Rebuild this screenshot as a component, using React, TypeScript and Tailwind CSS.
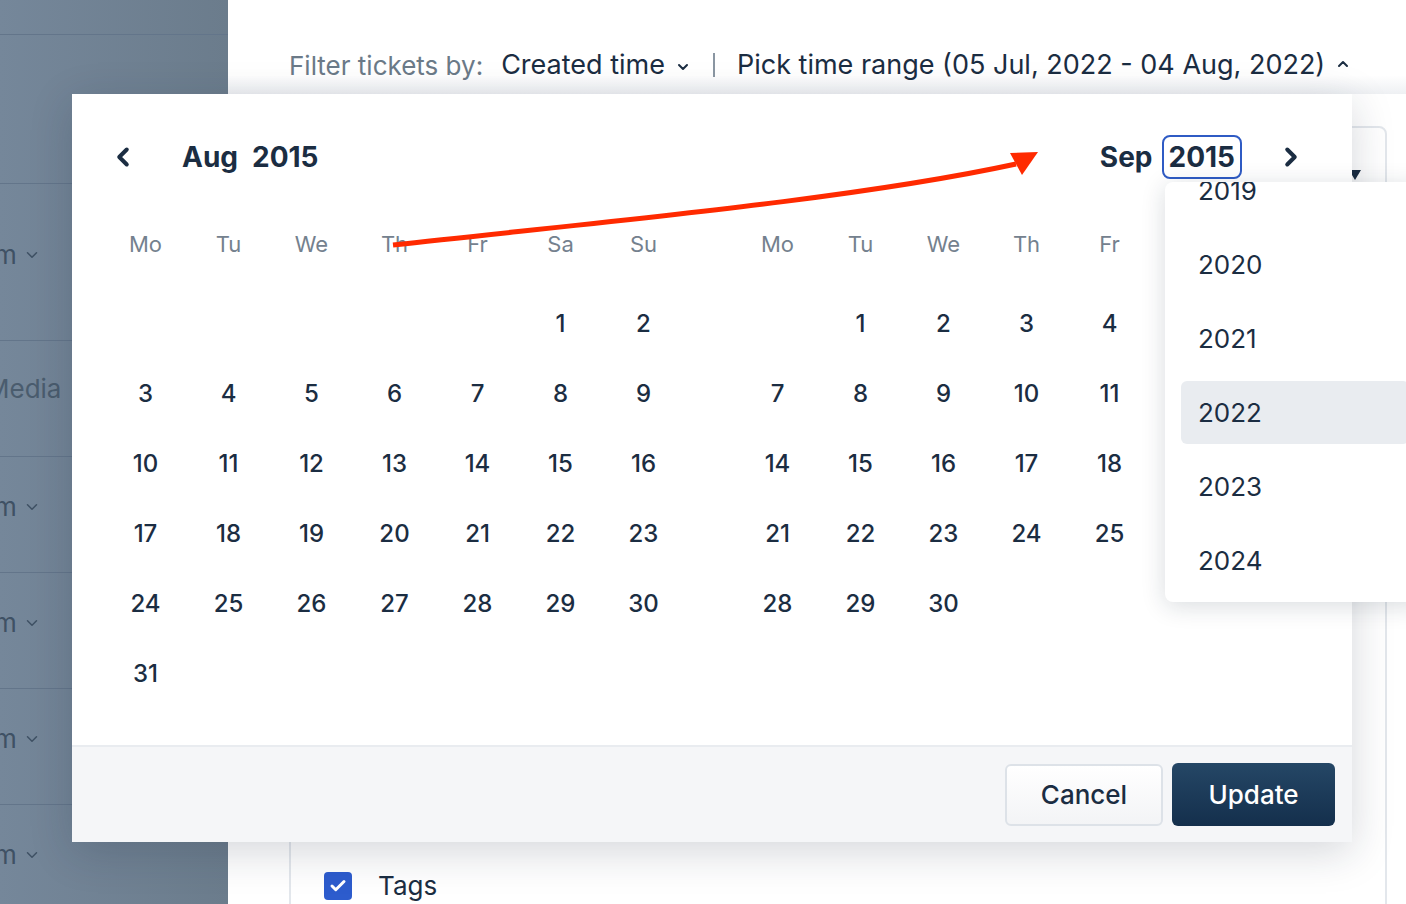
import { ChevronDown, ChevronLeft, ChevronRight, ChevronUp, Check } from 'lucide-react'

const WEEKDAYS = ['Mo', 'Tu', 'We', 'Th', 'Fr', 'Sa', 'Su']

// Build the cells for a month grid, Monday first.
function monthCells(offset: number, days: number) {
  const cells: (number | null)[] = []
  for (let i = 0; i < offset; i++) cells.push(null)
  for (let d = 1; d <= days; d++) cells.push(d)
  return cells
}

function MonthGrid({ offset, days }: { offset: number; days: number }) {
  return (
    <>
      <div className="mt-[30px] grid grid-cols-7">
        {WEEKDAYS.map((w) => (
          <div key={w} className="flex h-[70px] items-center justify-center text-[22px] text-[#74818e]">
            {w}
          </div>
        ))}
      </div>
      <div className="mt-[10px] grid grid-cols-7">
        {monthCells(offset, days).map((d, i) => (
          <div key={i} className="flex h-[70px] items-center justify-center text-[24px] font-medium text-[#1b2d42]">
            {d ?? ''}
          </div>
        ))}
      </div>
    </>
  )
}

const SIDEBAR_ROWS = [
  { h: 'h-[35px]', label: null },
  { h: 'h-[149px]', label: null },
  { h: 'h-[157px]', label: 'm', pt: 'pt-[51px]' },
  { h: 'h-[116px]', label: 'Media', pt: 'pt-[28px]' },
  { h: 'h-[116px]', label: 'm', pt: 'pt-[30px]' },
  { h: 'h-[116px]', label: 'm', pt: 'pt-[30px]' },
  { h: 'h-[116px]', label: 'm', pt: 'pt-[30px]' },
  { h: 'h-[116px]', label: 'm', pt: 'pt-[30px]' },
]

export default function App() {
  return (
    <div className="relative h-[904px] w-[1406px] overflow-hidden bg-white font-['Inter',sans-serif]">
      <div className="flex h-full">
        {/* dimmed sidebar */}
        <aside className="h-full w-[228px] shrink-0 overflow-hidden bg-gradient-to-r from-[#75879a] to-[#6b7c8c]">
          {SIDEBAR_ROWS.map((row, i) => (
            <div key={i} className={`${row.h} ${row.pt ?? ''} border-b border-[#63758a]`}>
              {row.label === 'Media' && (
                <span className="-ml-[14px] text-[26px] text-[#4a5c6e]">Media</span>
              )}
              {row.label === 'm' && (
                <span className="-ml-[6px] flex items-center gap-[6px] text-[26px] text-[#3f5164]">
                  m
                  <ChevronDown size={18} strokeWidth={2} className="text-[#3f5164]" />
                </span>
              )}
            </div>
          ))}
        </aside>

        <main className="flex-1">
          <header className="flex h-[94px] bg-gradient-to-b from-white from-80% to-[#eef0f3] pl-[61px] pt-[48px]">
            <div className="flex h-[34px] items-center">
              <span className="text-[26px] text-[#6b7a88]">Filter tickets by:</span>
              <span className="ml-[18px] flex items-center text-[27px] text-[#1b2d42]">
                Created time
                <ChevronDown size={16} strokeWidth={3} className="ml-[10px] mt-[3px]" />
              </span>
              <span className="ml-[22px] h-[24px] w-[2px] bg-[#8a96a2]" />
              <span className="ml-[22px] flex items-center text-[27px] text-[#1b2d42]">
                Pick time range (05 Jul, 2022 - 04 Aug, 2022)
                <ChevronUp size={16} strokeWidth={3} className="ml-[10px] -mt-[2px]" />
              </span>
            </div>
          </header>

          <section className="ml-[61px] mr-[19px] mt-[32px] h-[800px] rounded-[8px] border-2 border-[#e3e7ec] bg-white">
            <div className="flex justify-end pr-[24px] pt-[42px]">
              <div className="h-0 w-0 border-l-[6px] border-r-[6px] border-t-[10px] border-l-transparent border-r-transparent border-t-[#1b2d42]" />
            </div>
            <div className="ml-[33px] mt-[686px] flex items-center gap-[26px]">
              <div className="flex h-[28px] w-[28px] items-center justify-center rounded-[4px] bg-[#2d5ccd]">
                <Check size={18} strokeWidth={4} className="text-white" />
              </div>
              <span className="text-[26px] text-[#1b2d42]">Tags</span>
            </div>
          </section>
        </main>
      </div>

      {/* date range popover */}
      <div className="absolute left-[72px] top-[94px] flex h-[748px] w-[1280px] flex-col bg-white shadow-[0_10px_40px_rgba(20,35,55,0.18)]">
        <div className="flex flex-1 gap-[51px] pl-[32px] pt-[41px]">
          <div className="w-[581px]">
            <div className="flex h-[44px] items-center">
              <ChevronLeft size={30} strokeWidth={3.2} className="ml-[4px] text-[#1b2d42]" />
              <div className="ml-[44px] flex items-center gap-[6px] text-[28px] font-bold text-[#1b2d42]">
                <span>Aug</span>
                <span className="rounded-[8px] border-2 border-transparent px-[6px]">2015</span>
              </div>
            </div>
            <MonthGrid offset={5} days={31} />
          </div>

          <div className="w-[581px]">
            <div className="flex h-[44px] items-center justify-end">
              <div className="flex items-center gap-[9px] text-[28px] font-bold text-[#1b2d42]">
                <span>Sep</span>
                <span className="rounded-[8px] border-2 border-[#2f5bc4] px-[5px] leading-[40px]">2015</span>
              </div>
              <ChevronRight size={30} strokeWidth={3.2} className="ml-[34px] mr-[11px] text-[#1b2d42]" />
            </div>
            <MonthGrid offset={1} days={30} />
          </div>
        </div>

        <footer className="flex h-[97px] items-center justify-end gap-[9px] border-t-2 border-[#e9ecf0] bg-[#f5f6f8] pr-[17px]">
          <button className="h-[62px] w-[158px] rounded-[6px] border-2 border-[#dde2e8] bg-gradient-to-b from-white to-[#f3f4f6] text-[26px] font-medium text-[#1b2d42]">
            Cancel
          </button>
          <button className="h-[63px] w-[163px] rounded-[6px] bg-gradient-to-b from-[#254766] to-[#142f4c] text-[26px] font-medium text-white">
            Update
          </button>
        </footer>
      </div>

      {/* year dropdown */}
      <div className="absolute left-[1165px] top-[182px] h-[420px] w-[260px] overflow-hidden rounded-[8px] bg-white shadow-[0_4px_24px_rgba(20,35,55,0.16)]">
        <div className="-mt-[29px] px-[16px]">
          {['2019', '2020', '2021', '2022', '2023', '2024'].map((y) => (
            <div key={y} className="flex h-[74px] items-center">
              <div
                className={`flex h-[63px] w-full items-center rounded-[6px] pl-[17px] text-[26px] text-[#1b2d42] ${
                  y === '2022' ? 'bg-[#e9ecf0]' : ''
                }`}
              >
                {y}
              </div>
            </div>
          ))}
        </div>
      </div>

      {/* annotation arrow */}
      <svg className="pointer-events-none absolute left-0 top-0" width="1406" height="904">
        <path d="M393 245 C 600 222, 850 200, 1016 164" fill="none" stroke="#ff2a00" strokeWidth="5" />
        <polygon points="1010,153 1038,152 1022,175" fill="#ff2a00" />
      </svg>
    </div>
  )
}
